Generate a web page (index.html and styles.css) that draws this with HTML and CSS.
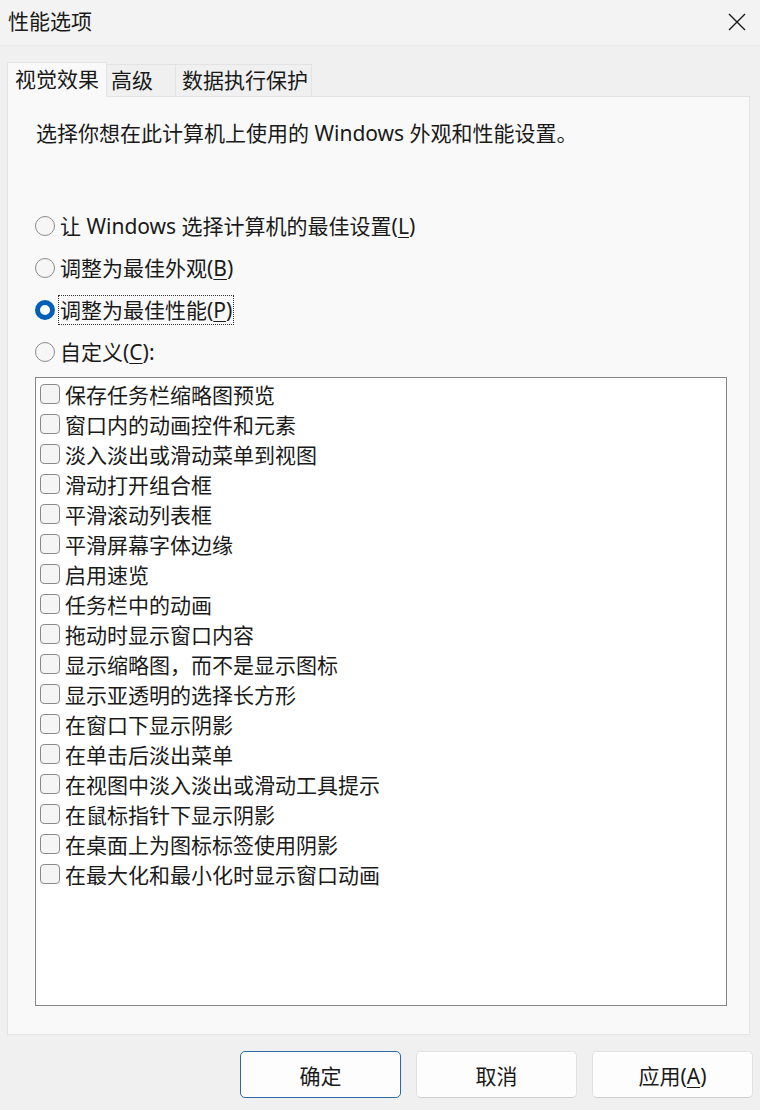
FILE: index.html
```html
<!DOCTYPE html>
<html lang="zh-CN">
<head>
<meta charset="utf-8">
<title>性能选项</title>
<link rel="stylesheet" href="styles.css">
</head>
<body>
<div class="titlebar">
  <span class="title">性能选项</span>
  <svg class="close" width="18" height="18" viewBox="0 0 18 18"><path d="M1 1 L17 17 M17 1 L1 17" stroke="#1a1a1a" stroke-width="1.4" fill="none"/></svg>
</div>
<div class="body">
  <div class="tabs">
    <div class="tab active">视觉效果</div>
    <div class="tab">高级</div>
    <div class="tab">数据执行保护</div>
  </div>
  <div class="panel">
    <p class="intro">选择你想在此计算机上使用的 Windows 外观和性能设置。</p>
    <div class="radios">
      <div class="radio"><span class="rb"></span><span class="lbl">让 Windows 选择计算机的最佳设置(<u>L</u>)</span></div>
      <div class="radio"><span class="rb"></span><span class="lbl">调整为最佳外观(<u>B</u>)</span></div>
      <div class="radio"><span class="rb on"></span><span class="lbl focus">调整为最佳性能(<u>P</u>)</span></div>
      <div class="radio"><span class="rb"></span><span class="lbl">自定义(<u>C</u>):</span></div>
    </div>
    <div class="list">
      <div class="item"><span class="cb"></span>保存任务栏缩略图预览</div>
      <div class="item"><span class="cb"></span>窗口内的动画控件和元素</div>
      <div class="item"><span class="cb"></span>淡入淡出或滑动菜单到视图</div>
      <div class="item"><span class="cb"></span>滑动打开组合框</div>
      <div class="item"><span class="cb"></span>平滑滚动列表框</div>
      <div class="item"><span class="cb"></span>平滑屏幕字体边缘</div>
      <div class="item"><span class="cb"></span>启用速览</div>
      <div class="item"><span class="cb"></span>任务栏中的动画</div>
      <div class="item"><span class="cb"></span>拖动时显示窗口内容</div>
      <div class="item"><span class="cb"></span>显示缩略图，而不是显示图标</div>
      <div class="item"><span class="cb"></span>显示亚透明的选择长方形</div>
      <div class="item"><span class="cb"></span>在窗口下显示阴影</div>
      <div class="item"><span class="cb"></span>在单击后淡出菜单</div>
      <div class="item"><span class="cb"></span>在视图中淡入淡出或滑动工具提示</div>
      <div class="item"><span class="cb"></span>在鼠标指针下显示阴影</div>
      <div class="item"><span class="cb"></span>在桌面上为图标标签使用阴影</div>
      <div class="item"><span class="cb"></span>在最大化和最小化时显示窗口动画</div>
    </div>
  </div>
  <div class="buttons">
    <button class="btn primary">确定</button>
    <button class="btn">取消</button>
    <button class="btn">应用(<u>A</u>)</button>
  </div>
</div>
</body>
</html>
```
FILE: styles.css
```css
* { box-sizing: border-box; }
html, body { margin: 0; padding: 0; }
body {
  width: 760px;
  height: 1110px;
  background: #f0f0f0;
  font-family: "Noto Sans", "Noto Sans CJK SC", sans-serif;
  font-size: 21px;
  color: #1a1a1a;
  overflow: hidden;
}
.titlebar {
  height: 46px;
  background: #f3f3f3;
  border-bottom: 1px solid #ebebeb;
  display: flex;
  align-items: center;
  justify-content: space-between;
  padding: 0 14px 4px 8px;
}
.title { font-size: 21px; line-height: 28px; }
.close { display: block; margin-top: 2px; }
.body { padding: 16px 10px 0 7px; }
.tabs { display: flex; align-items: flex-end; height: 34px; position: relative; z-index: 1; }
.tab {
  height: 32px;
  line-height: 30px;
  background: #f0f0f0;
  border: 1px solid #e3e3e3;
  border-bottom: none;
  margin-left: -1px;
  font-size: 21px;
}
.tab.active {
  height: 35px;
  margin-left: 0;
  background: #f9f9f9;
  padding: 0 7px 0 7px;
  line-height: 33px;
  margin-bottom: -1px;
}
.tab:nth-child(2) { padding: 0 22px 0 4px; }
.tab:nth-child(3) { padding: 0 3px 0 6px; }
.panel {
  width: 743px;
  height: 939px;
  background: #f9f9f9;
  border: 1px solid #e3e3e3;
  padding: 21px 0 0 27px;
}
.intro { margin: 0; line-height: 30px; padding-left: 1px; }
.radios { margin-top: 57px; }
.radio { display: flex; align-items: center; height: 42px; }
.rb {
  width: 20px; height: 20px;
  border-radius: 50%;
  border: 1px solid #8a8a8a;
  background: #f6f6f6;
  margin-right: 5px;
  flex: none;
}
.rb.on {
  border: 5px solid #005fb8;
  background: #ffffff;
}
.lbl { line-height: 28px; padding: 0 1px; border: 1px dotted transparent; margin-left: -2px; }
.lbl.focus { border-color: #333; }
.list {
  margin-top: 4px;
  width: 692px;
  height: 629px;
  background: #ffffff;
  border: 1px solid #858585;
  padding: 1px 0 0 4px;
}
.item { display: flex; align-items: center; height: 30px; white-space: nowrap; }
.cb {
  width: 20px; height: 20px;
  border: 1px solid #8a8a8a;
  border-radius: 4px;
  background: #f5f5f5;
  margin-right: 5px;
  flex: none;
}
u { text-decoration-thickness: 1px; text-underline-offset: 3px; }
.buttons {
  display: flex;
  justify-content: flex-end;
  gap: 15px;
  margin-top: 16px;
  margin-right: -3px;
}
.btn {
  width: 161px;
  height: 47px;
  font-family: inherit;
  font-size: 21px;
  color: #1a1a1a;
  background: #fdfdfd;
  border: 1px solid #e1e1e1;
  border-bottom-color: #cfcfcf;
  border-radius: 5px;
  padding: 0;
}
.btn.primary { border: 1px solid #2a6aa8; }
```
